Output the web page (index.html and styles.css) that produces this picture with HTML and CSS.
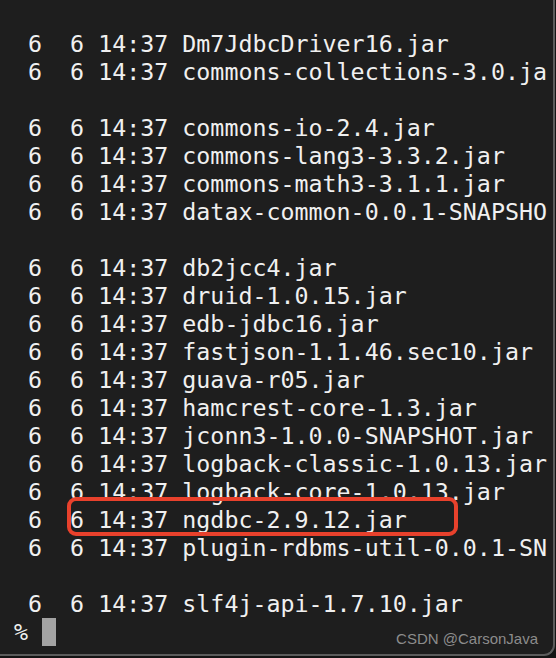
FILE: index.html
```html
<!DOCTYPE html>
<html>
<head>
<meta charset="utf-8">
<link rel="stylesheet" href="styles.css">
</head>
<body>
<div class="window">
<pre class="term"> 6  6 14:37 Dm7JdbcDriver16.jar
 6  6 14:37 commons-collections-3.0.ja

 6  6 14:37 commons-io-2.4.jar
 6  6 14:37 commons-lang3-3.3.2.jar
 6  6 14:37 commons-math3-3.1.1.jar
 6  6 14:37 datax-common-0.0.1-SNAPSHO

 6  6 14:37 db2jcc4.jar
 6  6 14:37 druid-1.0.15.jar
 6  6 14:37 edb-jdbc16.jar
 6  6 14:37 fastjson-1.1.46.sec10.jar
 6  6 14:37 guava-r05.jar
 6  6 14:37 hamcrest-core-1.3.jar
 6  6 14:37 jconn3-1.0.0-SNAPSHOT.jar
 6  6 14:37 logback-classic-1.0.13.jar
 6  6 14:37 logback-core-1.0.13.jar
 6  6 14:37 ngdbc-2.9.12.jar
 6  6 14:37 plugin-rdbms-util-0.0.1-SN

 6  6 14:37 slf4j-api-1.7.10.jar
% <span class="cursor"></span></pre>
<div class="highlight"></div>
<div class="watermark">CSDN @CarsonJava</div>
</div>
</body>
</html>
```
FILE: styles.css
```css
html, body {
  margin: 0;
  padding: 0;
  background: #141414;
}
.window {
  position: relative;
  width: 553px;
  height: 654px;
  background: #1e1e1e;
  border-right: 2px solid #5c5c5c;
  border-bottom: 2px solid #5c5c5c;
  border-bottom-right-radius: 11px;
  overflow: hidden;
}
.term {
  margin: 0;
  padding: 30px 0 0 14px;
  font-family: "DejaVu Sans Mono", monospace;
  font-size: 23.3px;
  line-height: 28px;
  color: #f0f0f0;
  white-space: pre;
  overflow: hidden;
}
.cursor {
  display: inline-block;
  width: 14px;
  height: 28px;
  background: #a3a3a3;
  vertical-align: top;
}
.highlight {
  position: absolute;
  left: 67px;
  top: 497px;
  width: 383px;
  height: 31px;
  border: 4.5px solid #e8412c;
  border-radius: 9px;
}
.watermark {
  position: absolute;
  right: 15px;
  bottom: 7px;
  font-family: "Liberation Sans", sans-serif;
  font-size: 15px;
  color: #8c8c8c;
}
```
